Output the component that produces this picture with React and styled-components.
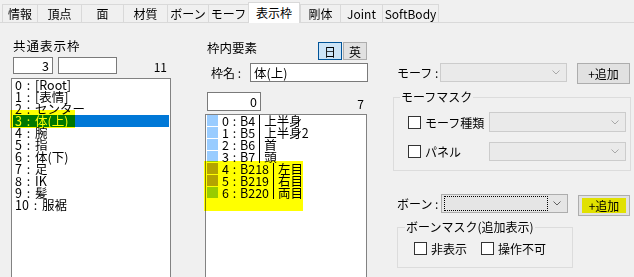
import React from 'react'
import styled, { createGlobalStyle } from 'styled-components'

const GlobalStyle = createGlobalStyle`
  * { box-sizing: border-box; }
  body {
    margin: 0;
    background: #f0f0f0;
    color: #000;
    font-family: "Noto Sans CJK JP", "Noto Sans", sans-serif;
    font-size: 12px;
  }
`

const tabs = [
  ['情報', 35], ['頂点', 44], ['面', 42], ['材質', 44], ['ボーン', 41],
  ['モーフ', 40], ['表示枠', 52], ['剛体', 40], ['Joint', 42], ['SoftBody', 57],
]

const frames = ['[Root]', '[表情]', 'センター', '体(上)', '腕', '指', '体(下)', '足', 'IK', '髪', '服裾']

const elements = [
  { code: 'B4', name: '上半身', color: '#99ccff' },
  { code: 'B5', name: '上半身2', color: '#99ccff' },
  { code: 'B6', name: '首', color: '#99ccff' },
  { code: 'B7', name: '頭', color: '#99ccff' },
  { code: 'B218', name: '左目', color: '#b4a4c8' },
  { code: 'B219', name: '右目', color: '#b4a4c8' },
  { code: 'B220', name: '両目', color: '#99ccff' },
]

const Chevron = ({ color }) => (
  <svg width="8" height="5" viewBox="0 0 8 5">
    <polyline points="0.5,0.5 4,4 7.5,0.5" fill="none" stroke={color} strokeWidth="1" />
  </svg>
)

const App = () => (
  <Root>
    <GlobalStyle />
    <TabBar>
      {tabs.map(([label, w], i) => (
        <Tab key={label} $w={w} $active={i === 6} $last={i === tabs.length - 1}>{label}</Tab>
      ))}
    </TabBar>

    <Content>
      <LeftCol>
        <SectionLabel $spacing={1}>共通表示枠</SectionLabel>
        <CountRow $gap={5}>
          <TextBox $w={40} $align="right">3</TextBox>
          <TextBox $w={59} />
          <Count>11</Count>
        </CountRow>
        <ListBox $w={160}>
          {frames.map((f, i) => (
            <FrameItem key={f} $selected={i === 3}>{i} : {f}</FrameItem>
          ))}
        </ListBox>
      </LeftCol>

      <MiddleCol>
        <HeaderRow>
          <SectionLabel>枠内要素</SectionLabel>
          <LangGroup>
            <LangButton $active>日</LangButton>
            <LangButton>英</LangButton>
          </LangGroup>
        </HeaderRow>
        <NameRow>
          <FieldLabel $w={45}>枠名 :</FieldLabel>
          <TextBox $w={118} $h={19}>体(上)</TextBox>
        </NameRow>
        <CountRow $gap={0} $top={10}>
          <TextBox $w={54} $h={19} $align="right">0</TextBox>
          <Count>7</Count>
        </CountRow>
        <ListBox $w={162} $top={3} $spacing={1}>
          {elements.map((el, i) => (
            <ElementItem key={el.code}>
              <Swatch $color={el.color} />
              <ElementCode>{i} : {el.code}</ElementCode>
              <ElementName>{el.name}</ElementName>
            </ElementItem>
          ))}
        </ListBox>
      </MiddleCol>

      <RightCol>
        <ControlRow>
          <FieldLabel $w={47} $pad={4}>モーフ :</FieldLabel>
          <Combo $w={127} $disabled>
            <span />
            <Chevron color="#a8a8a8" />
          </Combo>
          <Button $w={53}>+追加</Button>
        </ControlRow>

        <GroupBox $w={238} $h={81} $top={6} $pad={6}>
          <legend>モーフマスク</legend>
          <MaskRow $top={8}>
            <CheckOption $w={81}>
              <CheckBox />
              <span>モーフ種類</span>
            </CheckOption>
            <Combo $w={137} $h={20} $disabled>
              <span />
              <Chevron color="#a8a8a8" />
            </Combo>
          </MaskRow>
          <MaskRow $top={10}>
            <CheckOption $w={81}>
              <CheckBox />
              <span>パネル</span>
            </CheckOption>
            <Combo $w={137} $disabled>
              <span />
              <Chevron color="#a8a8a8" />
            </Combo>
          </MaskRow>
        </GroupBox>

        <ControlRow $top={23}>
          <FieldLabel $w={48} $pad={4}>ボーン :</FieldLabel>
          <Combo $w={127}>
            <FocusRing />
            <Chevron color="#606060" />
          </Combo>
          <Button $w={52} $offset={1}>+追加</Button>
        </ControlRow>

        <GroupBox $w={176} $h={48} $top={4} $left={4} $pad={7}>
          <legend>ボーンマスク(追加表示)</legend>
          <OptionRow>
            <CheckOption>
              <CheckBox />
              <span>非表示</span>
            </CheckOption>
            <CheckOption>
              <CheckBox />
              <span>操作不可</span>
            </CheckOption>
          </OptionRow>
        </GroupBox>
      </RightCol>
    </Content>

    <Marker $x={10} $y={110} $w={65} $h={18} />
    <Marker $x={204} $y={161} $w={99} $h={50} />
    <Marker $x={582} $y={198} $w={44} $h={15} />
  </Root>
)

export default App

const Root = styled.div`
  position: relative;
  width: 634px;
  height: 277px;
  overflow: hidden;
  isolation: isolate;
`

const TabBar = styled.div`
  display: flex;
  align-items: flex-end;
  height: 23px;
  padding-left: 2px;
  border-bottom: 1px solid #d9d9d9;
`

const Tab = styled.div`
  width: ${({ $w }) => $w}px;
  height: ${({ $active }) => ($active ? 21 : 18)}px;
  margin-bottom: ${({ $active }) => ($active ? -1 : 0)}px;
  display: flex;
  align-items: center;
  justify-content: center;
  background: ${({ $active }) => ($active ? '#ffffff' : '#f0f0f0')};
  border: 1px solid #d9d9d9;
  border-bottom: none;
  border-right: ${({ $last, $active }) => ($last || $active ? '1px solid #d9d9d9' : 'none')};
  font-size: 12px;
  line-height: 14px;
  position: relative;
  z-index: ${({ $active }) => ($active ? 1 : 0)};
`

const Content = styled.div`
  display: flex;
  align-items: flex-start;
  padding-left: 11px;
`

const LeftCol = styled.div`
  width: 160px;
  padding-top: 16px;
  display: flex;
  flex-direction: column;
`

const MiddleCol = styled.div`
  width: 163px;
  margin-left: 34px;
  padding-top: 18px;
  display: flex;
  flex-direction: column;
`

const RightCol = styled.div`
  width: 241px;
  margin-left: 25px;
  padding-top: 40px;
  display: flex;
  flex-direction: column;
`

const SectionLabel = styled.div`
  font-size: 12.5px;
  line-height: 13px;
  letter-spacing: ${({ $spacing }) => $spacing || 0}px;
  padding-left: 2px;
`

const CountRow = styled.div`
  display: flex;
  align-items: flex-end;
  gap: ${({ $gap }) => $gap}px;
  margin-top: ${({ $top }) => $top || 5}px;
  padding-left: 2px;
`

const TextBox = styled.div`
  width: ${({ $w }) => $w}px;
  height: ${({ $h }) => $h || 17}px;
  line-height: ${({ $h }) => ($h || 17) - 2}px;
  padding: 0 3px;
  text-align: ${({ $align }) => $align || 'left'};
  background: #fff;
  border: 1px solid #7a7a7a;
  font-size: 12.5px;
`

const Count = styled.div`
  margin-left: auto;
  padding-right: 4px;
  line-height: 12px;
  padding-bottom: 1px;
`

const ListBox = styled.div`
  width: ${({ $w }) => $w}px;
  height: 220px;
  margin-top: ${({ $top }) => $top || 4}px;
  background: #fff;
  border: 1px solid #828282;
  font-size: 12.5px;
  word-spacing: ${({ $spacing }) => ($spacing === undefined ? 2 : $spacing)}px;
`

const FrameItem = styled.div`
  height: 12px;
  line-height: 12px;
  margin: 0 1px;
  padding-left: 2px;
  white-space: nowrap;
  background: ${({ $selected }) => ($selected ? '#0078d7' : 'transparent')};
  color: ${({ $selected }) => ($selected ? '#fff' : '#000')};
`

const ElementItem = styled.div`
  display: flex;
  align-items: stretch;
  height: 12px;
  line-height: 12px;
  padding-left: 1px;
  white-space: nowrap;
`

const Swatch = styled.span`
  width: 11px;
  height: 11px;
  background: ${({ $color }) => $color};
  margin-right: 4px;
`

const ElementCode = styled.span`
  padding-right: 4px;
`

const ElementName = styled.span`
  border-left: 1px solid #000;
  padding-left: 4px;
`

const HeaderRow = styled.div`
  display: flex;
  align-items: flex-start;
  height: 19px;
`

const LangGroup = styled.div`
  display: flex;
  gap: 1px;
  margin-left: auto;
  margin-top: 1px;
  margin-right: 1px;
`

const LangButton = styled.div`
  width: 24px;
  height: 18px;
  display: flex;
  align-items: center;
  justify-content: center;
  background: ${({ $active }) => ($active ? '#cce4f7' : '#e1e1e1')};
  border: 1px solid ${({ $active }) => ($active ? '#005499' : '#adadad')};
  font-size: 12px;
`

const NameRow = styled.div`
  display: flex;
  align-items: center;
  margin-top: 3px;
`

const FieldLabel = styled.div`
  width: ${({ $w }) => $w}px;
  padding-left: ${({ $pad }) => ($pad === undefined ? 6 : $pad)}px;
  line-height: 19px;
  white-space: nowrap;
`

const ControlRow = styled.div`
  display: flex;
  align-items: flex-start;
  margin-top: ${({ $top }) => $top || 0}px;
`

const Combo = styled.div`
  position: relative;
  width: ${({ $w }) => $w}px;
  height: ${({ $h }) => $h || 19}px;
  display: flex;
  align-items: center;
  justify-content: space-between;
  padding: 0 6px 0 2px;
  background: ${({ $disabled }) => ($disabled ? '#eaeaea' : '#e5e5e5')};
  border: 1px solid ${({ $disabled }) => ($disabled ? '#cccccc' : '#adadad')};
`

const FocusRing = styled.span`
  width: 104px;
  height: 15px;
  border: 1px dotted #000;
`

const Button = styled.div`
  width: ${({ $w }) => $w}px;
  height: 21px;
  margin-left: 10px;
  margin-top: ${({ $offset }) => $offset || 0}px;
  display: flex;
  align-items: center;
  justify-content: center;
  background: #e1e1e1;
  border: 1px solid #adadad;
  font-size: 12px;
`

const GroupBox = styled.fieldset`
  width: ${({ $w }) => $w}px;
  height: ${({ $h }) => $h}px;
  margin: ${({ $top }) => $top}px 0 0 ${({ $left }) => $left || 0}px;
  padding: 0 0 0 ${({ $pad }) => $pad}px;
  border: 1px solid #dcdcdc;
  min-width: 0;

  legend {
    padding: 0 1px;
    line-height: 14px;
    font-size: 12px;
  }
`

const MaskRow = styled.div`
  display: flex;
  align-items: center;
  margin-top: ${({ $top }) => $top}px;
  margin-left: 8px;
`

const OptionRow = styled.div`
  display: flex;
  gap: 14px;
  margin-top: 8px;
  margin-left: 9px;
`

const CheckOption = styled.label`
  display: flex;
  align-items: center;
  gap: 4px;
  width: ${({ $w }) => ($w ? `${$w}px` : 'auto')};
  line-height: 13px;
  white-space: nowrap;
`

const CheckBox = styled.span`
  width: 13px;
  height: 13px;
  flex-shrink: 0;
  background: #fff;
  border: 1px solid #333;
`

const Marker = styled.div`
  position: absolute;
  left: ${({ $x }) => $x}px;
  top: ${({ $y }) => $y}px;
  width: ${({ $w }) => $w}px;
  height: ${({ $h }) => $h}px;
  background: #ffff00;
  mix-blend-mode: multiply;
  pointer-events: none;
`
